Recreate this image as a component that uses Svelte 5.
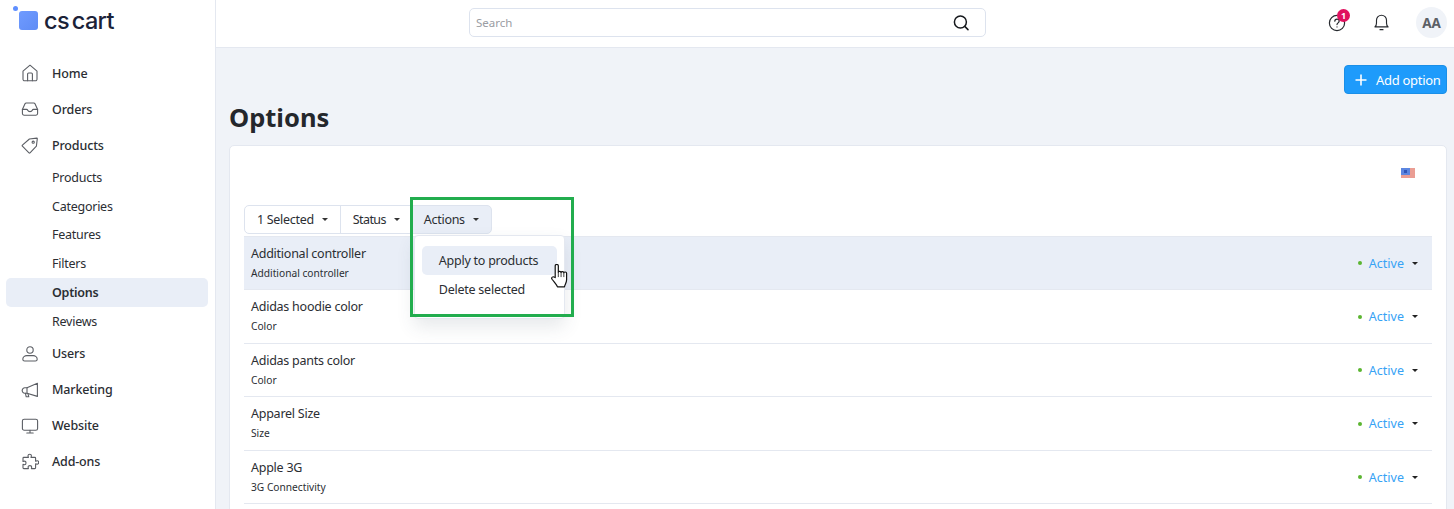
<script>
  const subItems = ['Products', 'Categories', 'Features', 'Filters', 'Options', 'Reviews'];
  const rows = [
    { name: 'Additional controller', sub: 'Additional controller', selected: true },
    { name: 'Adidas hoodie color', sub: 'Color' },
    { name: 'Adidas pants color', sub: 'Color' },
    { name: 'Apparel Size', sub: 'Size' },
    { name: 'Apple 3G', sub: '3G Connectivity' }
  ];
</script>

{#snippet navIcon(name)}
  <svg class="nav-icon" viewBox="0 0 18 18" fill="none" stroke="#5b5e64" stroke-width="1.1" stroke-linecap="round" stroke-linejoin="round">
    {#if name === 'home'}
      <path d="M2 7.2 9 1.2l7 6v8a1.6 1.6 0 0 1-1.600 1.600H3.600A1.600 1.600 0 0 1 2 15.200z" />
      <path d="M6.600 16.800V10a1 1 0 0 1 1-1h2.800a1 1 0 0 1 1 1v6.800" />
    {:else if name === 'orders'}
      <path d="M1.400 9.400 4 3.800a1.400 1.400 0 0 1 1.300-.8h7.400a1.400 1.400 0 0 1 1.300.8l2.600 5.600v4.200a1.600 1.600 0 0 1-1.600 1.600H3a1.600 1.600 0 0 1-1.600-1.600z" />
      <path d="M1.400 9.400h4.200c.6 0 .9.3 1.100.8.4 1 1.200 1.400 2.300 1.400s1.900-.4 2.300-1.400c.2-.5.5-.8 1.100-.8h4.200" />
    {:else if name === 'tag'}
      <path d="M1.400 9.200 8.400 3l7.400-.9c.3 0 .5.2.5.5l-.9 7.600-6.400 6.600c-.3.3-.7.3-1 0L1.400 10.200c-.3-.3-.3-.7 0-1z" />
      <circle cx="12.200" cy="6.200" r="1.100" />
    {:else if name === 'user'}
      <circle cx="9" cy="5" r="3.200" />
      <path d="M1.800 14.200c0-2.200 2-3.600 4-3.600h6.400c2 0 4 1.400 4 3.600 0 1.200-.8 1.800-1.800 1.800H3.600c-1 0-1.800-.6-1.800-1.800z" />
    {:else if name === 'megaphone'}
      <path d="M16.400 2.200v13.200L6 12.200H3.800a2.600 2.600 0 0 1-2.600-2.800 2.600 2.600 0 0 1 2.600-2.600H6z" />
      <path d="M6 6.800v5.400M4.400 12.200l.8 3.600h2.600l-.8-3" />
    {:else if name === 'monitor'}
      <rect x="1.400" y="2.200" width="15.200" height="11" rx="1.800" />
      <path d="M9 13.200v2.600M5.800 16h6.400" />
    {:else}
      <path d="M7 2.800c0-2 3.400-2 3.400 0 0 .7-.4 1-.4 1.600h3.800c.5 0 .8.3.8.8v3c.6 0 1-.4 1.600-.4 2 0 2 3.400 0 3.400-.6 0-1-.4-1.600-.4v4c0 .5-.3.8-.8.8h-3.400c0-.6.3-1 .3-1.500 0-2-3.600-2-3.600 0 0 .5.3.9.3 1.500H2.800c-.5 0-.8-.3-.8-.8v-3.400c.6 0 1 .3 1.500.3 2 0 2-3.600 0-3.600-.5 0-.9.3-1.500.3V5.200c0-.5.3-.8.8-.8h4.600C7.400 3.800 7 3.500 7 2.800z" />
    {/if}
  </svg>
{/snippet}

<div class="page">
  <aside class="sidebar">
    <div class="logo">
      <span class="logo-mark"><span class="logo-dot"></span></span>
      <span class="logo-text">cs cart</span>
    </div>
    <nav>
      <a class="nav-item">{@render navIcon('home')}Home</a>
      <a class="nav-item">{@render navIcon('orders')}Orders</a>
      <a class="nav-item">{@render navIcon('tag')}Products</a>
      <div class="sub-list">
        {#each subItems as item}
          <a class="sub-item" class:current={item === 'Options'}>{item}</a>
        {/each}
      </div>
      <a class="nav-item">{@render navIcon('user')}Users</a>
      <a class="nav-item">{@render navIcon('megaphone')}Marketing</a>
      <a class="nav-item">{@render navIcon('monitor')}Website</a>
      <a class="nav-item">{@render navIcon('puzzle')}Add-ons</a>
    </nav>
  </aside>

  <div class="main">
    <header class="topbar">
      <div class="search">
        <span class="placeholder">Search</span>
        <svg width="18" height="18" viewBox="0 0 18 18" fill="none" stroke="#15181c" stroke-width="1.5" stroke-linecap="round">
          <circle cx="8.400" cy="8" r="6" />
          <path d="m13 12.600 3 3" />
        </svg>
      </div>
      <div class="top-actions">
        <span class="help">
          <svg width="18" height="18" viewBox="0 0 18 18" fill="none" stroke="#26292e" stroke-width="1.200" stroke-linecap="round">
            <circle cx="9" cy="9" r="7.600" />
            <path d="M6.800 7.200c0-1.300 1-2.100 2.200-2.100s2.200.8 2.200 2c0 1.800-2.200 1.700-2.200 3.500M9 12.900v.1" />
          </svg>
          <span class="badge">1</span>
        </span>
        <svg class="bell" width="17" height="19" viewBox="0 0 18 20" fill="none" stroke="#26292e" stroke-width="1.200" stroke-linecap="round" stroke-linejoin="round">
          <path d="M2 14.600c1.200-1 1.700-2.200 1.700-4.200V7.600a5.300 5.300 0 0 1 10.600 0v2.800c0 2 .5 3.200 1.700 4.200z" />
          <path d="M7.400 17.600h3.200" />
        </svg>
        <span class="avatar">AA</span>
      </div>
    </header>

    <div class="content">
      <div class="page-actions">
        <button class="add-btn">
          <svg width="12" height="12" viewBox="0 0 12 12" stroke="#fff" stroke-width="1.600"><path d="M6 .5v11M.5 6h11" /></svg>
          Add option
        </button>
      </div>
      <h1>Options</h1>

      <section class="card">
        <div class="lang">
          <svg width="14" height="10" viewBox="0 0 14 10">
            <rect width="14" height="10" fill="#f3b9b0" />
            <path d="M0 1h14M0 3h14M0 5h14M0 7h14M0 9h14" stroke="#e07d72" stroke-width=".9" />
            <rect width="9" height="7" fill="#5c86e0" />
            <rect x="3" y="2" width="3" height="3" fill="#2f55b8" />
          </svg>
        </div>

        <div class="toolbar">
          <div class="btn-group">
            <button class="tool-btn">1 Selected<span class="caret"></span></button>
            <button class="tool-btn status-btn">Status<span class="caret"></span></button>
            <div class="actions-wrap">
              <button class="tool-btn open">Actions<span class="caret"></span></button>
              <div class="dropdown">
                <div class="drop-item hover">Apply to products</div>
                <div class="drop-item">Delete selected</div>
              </div>
              <svg class="cursor" width="18" height="24" viewBox="1 1.500 15 22" preserveAspectRatio="none" fill="#fff" stroke="#111" stroke-width="1" stroke-linejoin="round">
                <path d="M4.500 14V3.200c0-1.700 2.600-1.700 2.600 0V9c0-1 2.300-1 2.300.2 0-1 2.300-1 2.300.3 0-.9 2.300-.9 2.300.5v6c0 2.800-1.400 4-1.800 6.500H6.400c-.8-2.200-2.100-3.500-4.500-7-1.100-1.700.9-3 2-1.800z" />
                <path d="M7.100 9v4.500M9.400 9.200v4.300M11.700 9.500v4" stroke-width=".7" />
              </svg>
              <span class="highlight-box"></span>
            </div>
          </div>
        </div>

        <div class="table">
          {#each rows as row}
            <div class="row" class:selected={row.selected}>
              <div class="row-info">
                <div class="row-name">{row.name}</div>
                <div class="row-sub">{row.sub}</div>
              </div>
              <div class="row-status">
                <span class="dot"></span>
                <span class="status-text">Active</span>
                <span class="caret dark"></span>
              </div>
            </div>
          {/each}
        </div>
      </section>
    </div>
  </div>
</div>

<style>
  :global(body) {
    margin: 0;
    background: #f0f3f8;
    font-family: "Noto Sans", "Open Sans", sans-serif;
    color: #2b2e33;
    overflow: hidden;
  }

  .page {
    display: flex;
    height: 509px;
    overflow: hidden;
  }

  .sidebar {
    width: 202px;
    flex: none;
    background: #fff;
    border-right: 1px solid #e4e8f0;
    padding: 0 7px 0 6px;
  }

  .logo {
    display: flex;
    align-items: center;
    height: 55px;
    padding-left: 13px;
    gap: 6px;
  }

  .logo-mark {
    position: relative;
    width: 19px;
    height: 19px;
    border-radius: 3px;
    background: linear-gradient(135deg, #6f9bff, #5f8cf5);
    margin-top: -14px;
  }

  .logo-dot {
    position: absolute;
    left: -6px;
    top: -5px;
    width: 5px;
    height: 5px;
    border-radius: 50%;
    background: #5f8fff;
  }

  .logo-text {
    font-family: "Inter", sans-serif;
    font-size: 23.500px;
    font-weight: 500;
    color: #1b2238;
    letter-spacing: -0.6px;
    word-spacing: -3px;
    margin-top: -14px;
  }

  nav {
    display: flex;
    flex-direction: column;
  }

  .nav-item {
    display: flex;
    align-items: center;
    height: 36px;
    padding-left: 15px;
    gap: 13px;
    font-size: 12.500px;
    letter-spacing: -0.15px;
    font-weight: 500;
    color: #2b2e33;
  }

  .nav-icon {
    width: 18px;
    height: 18px;
    flex: none;
  }

  .sub-list {
    display: flex;
    flex-direction: column;
  }

  .sub-item {
    display: flex;
    align-items: center;
    height: 28.800px;
    padding-left: 46px;
    font-size: 12.500px;
    letter-spacing: -0.25px;
    color: #2b2e33;
    border-radius: 5px;
  }

  .sub-item.current {
    background: #e9eef7;
    font-weight: 600;
  }

  .main {
    flex: 1;
    min-width: 0;
    display: flex;
    flex-direction: column;
  }

  .topbar {
    height: 47px;
    flex: none;
    background: #fff;
    border-bottom: 1px solid #e4e8f0;
    display: flex;
    align-items: center;
    padding: 0 7px 0 253px;
  }

  .search {
    width: 494px;
    height: 27px;
    border: 1px solid #dde3ee;
    border-radius: 5px;
    display: flex;
    align-items: center;
    justify-content: space-between;
    padding: 0 15px 0 6px;
    margin-top: -2px;
  }

  .placeholder {
    font-size: 11.500px;
    color: #9a9da3;
  }

  .top-actions {
    margin-left: auto;
    display: flex;
    align-items: center;
    gap: 26px;
    margin-top: -2px;
  }

  .help {
    position: relative;
    display: flex;
    margin-right: 1px;
  }

  .badge {
    position: absolute;
    top: -5px;
    right: -4px;
    width: 13px;
    height: 13px;
    border-radius: 50%;
    background: #e0115f;
    color: #fff;
    font-size: 9px;
    font-weight: 700;
    text-align: center;
    line-height: 13px;
  }

  .avatar {
    width: 31px;
    height: 31px;
    border-radius: 50%;
    background: #f0f3f8;
    color: #5c6066;
    font-size: 13.500px;
    font-weight: 700;
    display: flex;
    align-items: center;
    justify-content: center;
  }

  .content {
    flex: 1;
    padding: 17px 7px 0 13px;
    min-height: 0;
  }

  .page-actions {
    display: flex;
    justify-content: flex-end;
  }

  .add-btn {
    display: flex;
    align-items: center;
    gap: 9px;
    width: 103px;
    height: 29px;
    padding: 0 0 0 10px;
    background: #1e9bfb;
    color: #fff;
    border: 1px solid #1a8fe8;
    border-radius: 4px;
    font-family: inherit;
    font-size: 13px;
    letter-spacing: -0.3px;
  }

  h1 {
    margin: 6px 0 11px;
    font-size: 25.500px;
    line-height: 34px;
    font-weight: 700;
    color: #24272c;
  }

  .card {
    background: #fff;
    border: 1px solid #e4e8f0;
    border-radius: 5px 5px 0 0;
    padding: 0 14px;
    height: 400px;
  }

  .lang {
    display: flex;
    justify-content: flex-end;
    padding: 22px 17px 0 0;
    height: 37px;
  }

  .toolbar {
    display: flex;
  }

  .btn-group {
    display: flex;
  }

  .tool-btn {
    display: flex;
    align-items: center;
    height: 29px;
    padding: 0 12px;
    background: #fff;
    border: 1px solid #dde3ee;
    margin-left: -1px;
    font-family: inherit;
    font-size: 12.500px;
    letter-spacing: -0.3px;
    color: #2b2e33;
  }

  .btn-group > .tool-btn:first-child {
    margin-left: 0;
    border-radius: 5px 0 0 5px;
  }

  .tool-btn.status-btn {
    letter-spacing: -0.6px;
    padding-right: 11px;
  }

  .tool-btn.open {
    background: #e9eef7;
    border-radius: 0 5px 5px 0;
  }

  .caret {
    display: inline-block;
    width: 0;
    height: 0;
    margin-left: 8px;
    border-left: 3px solid transparent;
    border-right: 3px solid transparent;
    border-top: 3px solid #333;
  }

  .actions-wrap {
    position: relative;
  }

  .dropdown {
    position: absolute;
    left: 2px;
    top: 30px;
    width: 151px;
    box-sizing: border-box;
    height: 84px;
    padding: 10px 7px;
    background: #fff;
    border: 1px solid #e4e8f0;
    border-radius: 4px;
    box-shadow: 0 8px 18px rgba(60, 70, 90, 0.12);
    z-index: 3;
  }

  .drop-item {
    height: 29px;
    line-height: 29px;
    padding-left: 17px;
    font-size: 12.500px;
    letter-spacing: -0.25px;
    border-radius: 5px;
    white-space: nowrap;
  }

  .drop-item.hover {
    background: #e9eef7;
  }

  .cursor {
    position: absolute;
    left: 139px;
    top: 59px;
    z-index: 5;
  }

  .highlight-box {
    position: absolute;
    left: -2px;
    top: -8px;
    width: 164px;
    height: 120px;
    box-sizing: border-box;
    border: 3px solid #22ad4e;
    z-index: 4;
    pointer-events: none;
  }

  .table {
    margin-top: 1.500px;
    border-top: 1px solid #e4e8f0;
  }

  .row {
    display: flex;
    align-items: center;
    justify-content: space-between;
    height: 53.500px;
    box-sizing: border-box;
    padding: 0 14px 0 7px;
    border-bottom: 1px solid #e4e8f0;
  }

  .row.selected {
    background: #e9eef7;
  }

  .row-name {
    font-size: 12.500px;
    letter-spacing: -0.25px;
    line-height: 18px;
    color: #2b2e33;
  }

  .row-sub {
    font-size: 10.200px;
    line-height: 16px;
    margin-top: 2px;
    color: #2b2e33;
  }

  .row-status {
    display: flex;
    align-items: center;
    font-size: 12.500px;
    margin-top: 1px;
  }

  .dot {
    width: 4px;
    height: 4px;
    border-radius: 50%;
    background: #5bb531;
    margin-right: 7px;
  }

  .status-text {
    color: #36a2f5;
  }

  .caret.dark {
    margin-left: 8px;
    border-top-color: #222;
  }
</style>
